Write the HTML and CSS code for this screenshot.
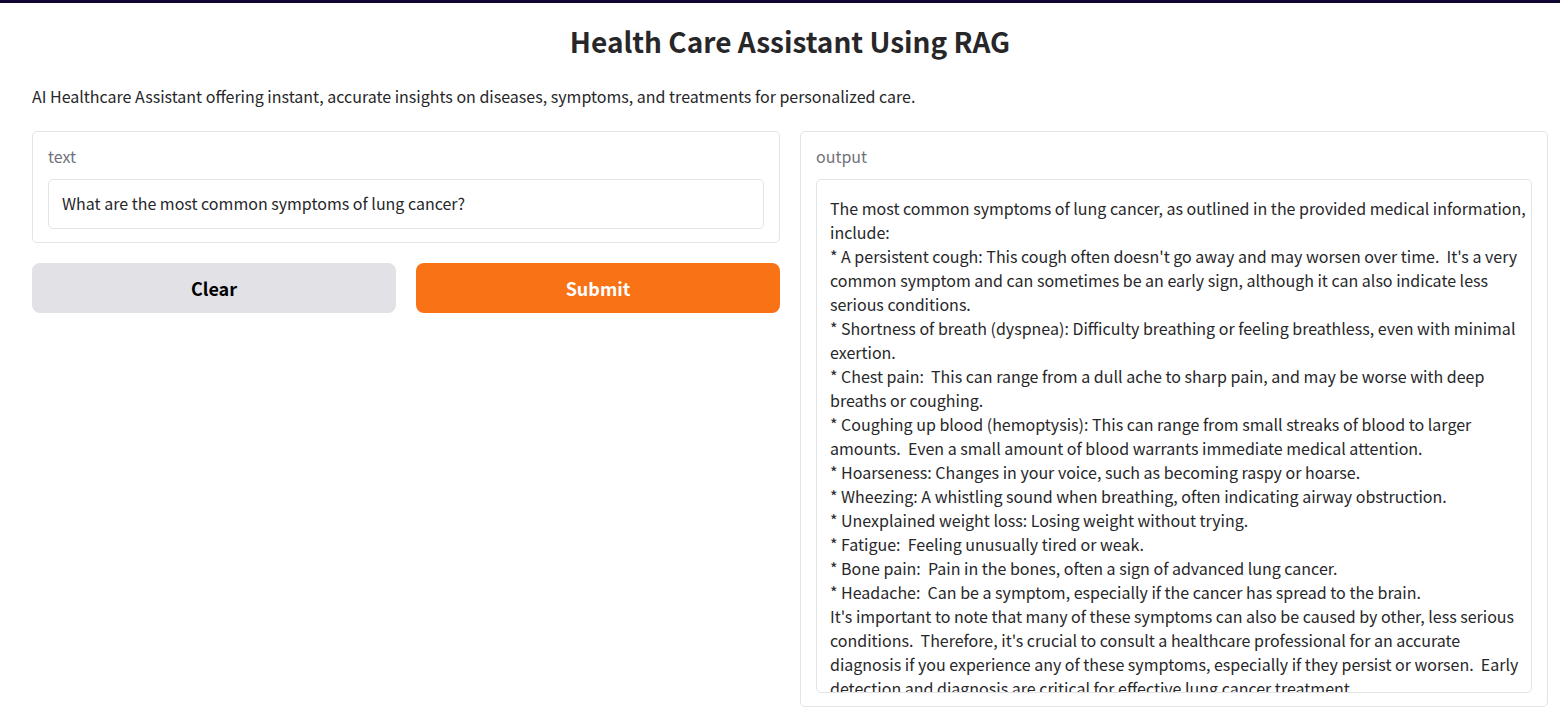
FILE: index.html
```html
<!DOCTYPE html>
<html lang="en">
<head>
<meta charset="utf-8">
<meta name="viewport" content="width=device-width, initial-scale=1">
<title>Health Care Assistant Using RAG</title>
<link rel="stylesheet" href="styles.css">
</head>
<body>
<main class="app">
<h1 class="title">Health Care Assistant Using RAG</h1>
<p class="description">AI Healthcare Assistant offering instant, accurate insights on diseases, symptoms, and treatments for personalized care.</p>
<div class="columns">
<form class="column">
<div class="panel">
<label class="label" for="question">text</label>
<input class="field field-line" id="question" type="text" value="What are the most common symptoms of lung cancer?">
</div>
<div class="actions">
<button class="button button-secondary" type="button">Clear</button>
<button class="button button-primary" type="button">Submit</button>
</div>
</form>
<div class="panel">
<label class="label" for="answer">output</label>
<textarea class="field field-area" id="answer" rows="21" readonly>The most common symptoms of lung cancer, as outlined in the provided medical information, include:
* A persistent cough: This cough often doesn't go away and may worsen over time.  It's a very common symptom and can sometimes be an early sign, although it can also indicate less serious conditions.
* Shortness of breath (dyspnea): Difficulty breathing or feeling breathless, even with minimal exertion.
* Chest pain:  This can range from a dull ache to sharp pain, and may be worse with deep breaths or coughing.
* Coughing up blood (hemoptysis): This can range from small streaks of blood to larger amounts.  Even a small amount of blood warrants immediate medical attention.
* Hoarseness: Changes in your voice, such as becoming raspy or hoarse.
* Wheezing: A whistling sound when breathing, often indicating airway obstruction.
* Unexplained weight loss: Losing weight without trying.
* Fatigue:  Feeling unusually tired or weak.
* Bone pain:  Pain in the bones, often a sign of advanced lung cancer.
* Headache:  Can be a symptom, especially if the cancer has spread to the brain.
It's important to note that many of these symptoms can also be caused by other, less serious conditions.  Therefore, it's crucial to consult a healthcare professional for an accurate diagnosis if you experience any of these symptoms, especially if they persist or worsen.  Early detection and diagnosis are critical for effective lung cancer treatment.</textarea>
</div>
</div>
</main>
</body>
</html>
```

FILE: styles.css
```css
* {
  box-sizing: border-box;
}

body {
  margin: 0;
  border-top: 3px solid #110535;
  background: #fff;
  color: #27272a;
  font-family: "Noto Sans CJK SC", "Open Sans", sans-serif;
  font-size: 16px;
  line-height: 24px;
}

.app {
  padding: 19px 12px 20px 32px;
}

.title {
  margin: 0 0 24px;
  font-size: 28px;
  line-height: 38px;
  font-weight: 700;
  text-align: center;
}

.description {
  margin: 0 0 23px;
}

.columns {
  display: grid;
  grid-template-columns: 1fr 1fr;
  align-items: start;
  gap: 20px;
}

.column {
  display: grid;
  gap: 20px;
}

.panel {
  padding: 12px 15px 13px;
  border: 1px solid #e4e4e7;
  border-radius: 5px;
}

.label {
  display: block;
  margin-bottom: 11px;
  color: #71717a;
}

.field {
  display: block;
  width: 100%;
  margin: 0;
  padding: 10px 13px 12px;
  border: 1px solid #e4e4e7;
  border-radius: 5px;
  background: #fff;
  color: inherit;
  font: inherit;
  outline: none;
}

.field-line {
  height: 50px;
}

.field-area {
  height: 514px;
  padding: 16px 4px 0 13px;
  overflow: hidden;
  resize: none;
}

.actions {
  display: grid;
  grid-template-columns: 1fr 1fr;
  gap: 20px;
}

.button {
  height: 50px;
  padding: 0 12px;
  border: 0;
  border-radius: 8px;
  font: inherit;
  font-size: 18px;
  font-weight: 700;
}

.button-secondary {
  background: #e1e1e6;
  color: #000;
}

.button-primary {
  background: #f97316;
  color: #fff;
}
```
